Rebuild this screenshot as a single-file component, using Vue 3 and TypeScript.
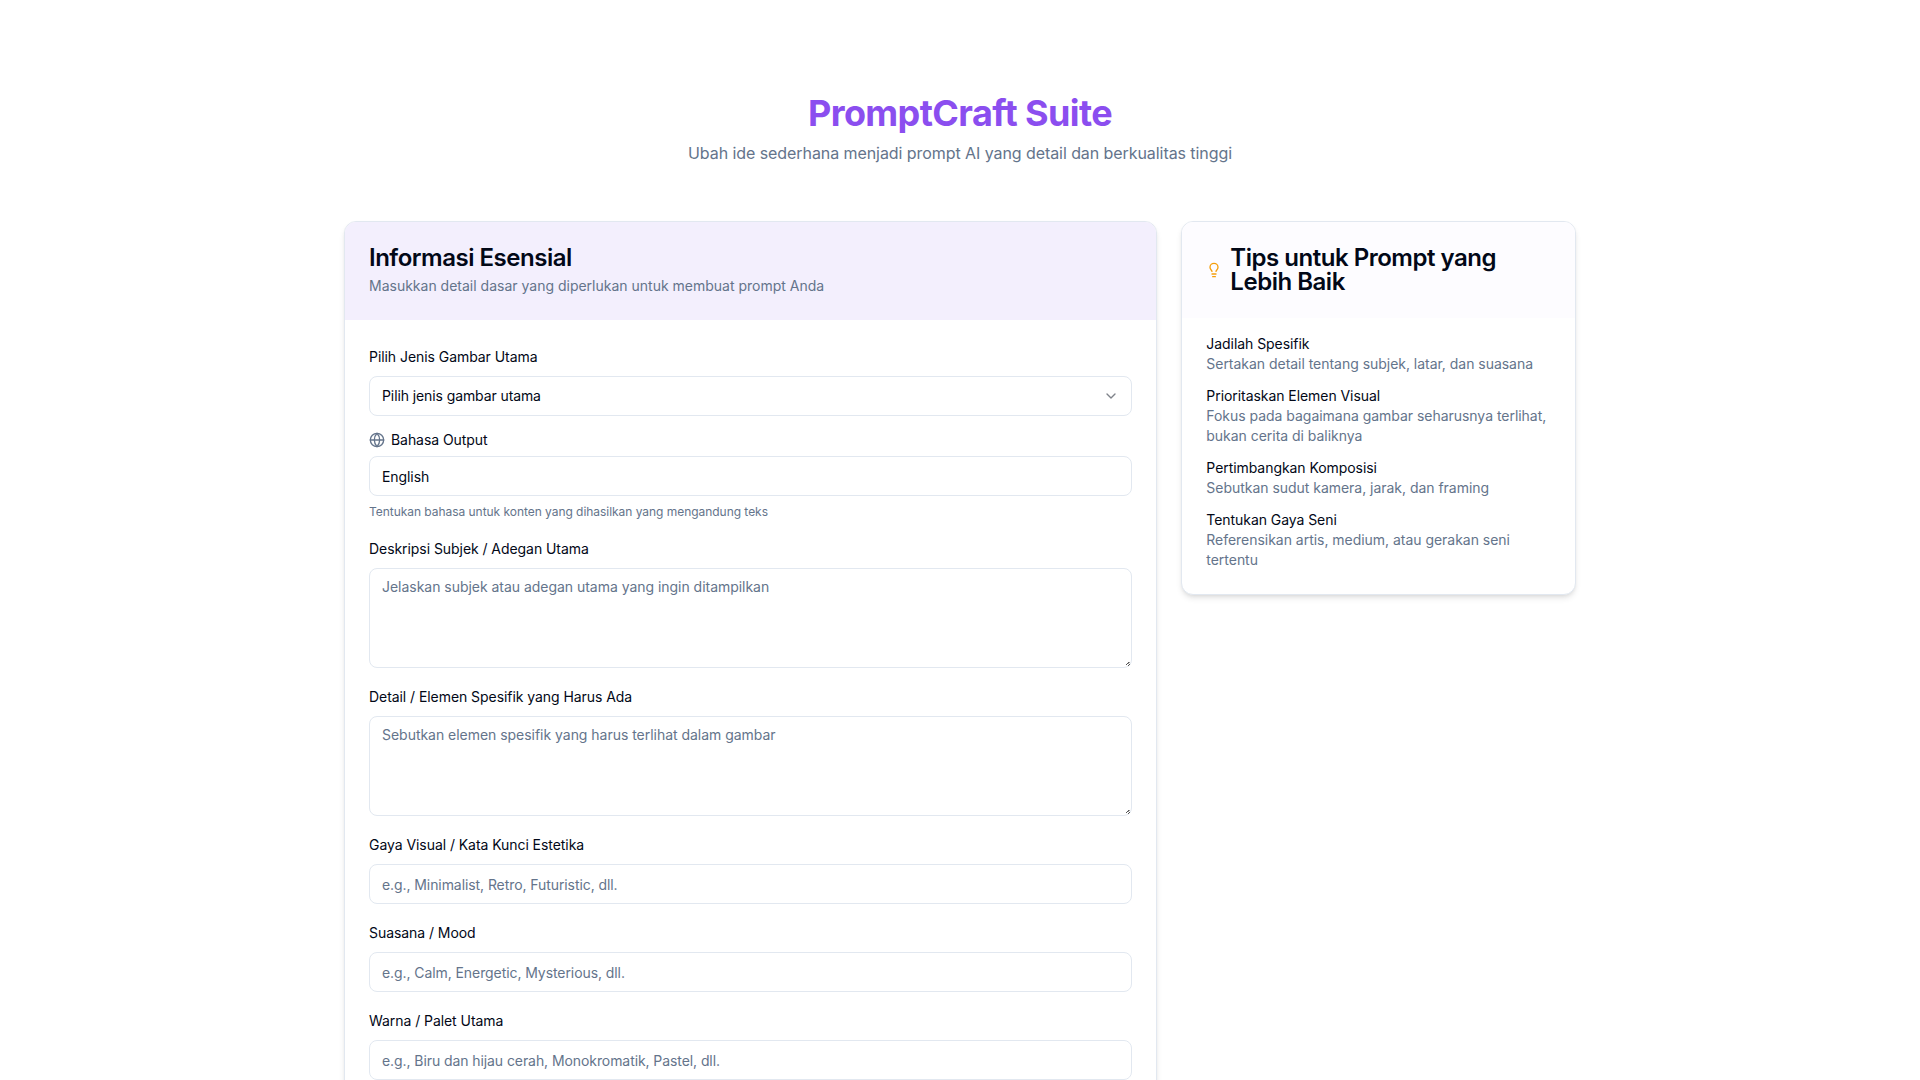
<script setup lang="ts">
interface Tip { title: string; text: string }
const tips: Tip[] = [
  { title: 'Jadilah Spesifik', text: 'Sertakan detail tentang subjek, latar, dan suasana' },
  { title: 'Prioritaskan Elemen Visual', text: 'Fokus pada bagaimana gambar seharusnya terlihat, bukan cerita di baliknya' },
  { title: 'Pertimbangkan Komposisi', text: 'Sebutkan sudut kamera, jarak, dan framing' },
  { title: 'Tentukan Gaya Seni', text: 'Referensikan artis, medium, atau gerakan seni tertentu' },
]
const inputs = [
  { label: 'Gaya Visual / Kata Kunci Estetika', placeholder: 'e.g., Minimalist, Retro, Futuristic, dll.' },
  { label: 'Suasana / Mood', placeholder: 'e.g., Calm, Energetic, Mysterious, dll.' },
  { label: 'Warna / Palet Utama', placeholder: 'e.g., Biru dan hijau cerah, Monokromatik, Pastel, dll.' },
]
const areas = [
  { label: 'Deskripsi Subjek / Adegan Utama', placeholder: 'Jelaskan subjek atau adegan utama yang ingin ditampilkan' },
  { label: 'Detail / Elemen Spesifik yang Harus Ada', placeholder: 'Sebutkan elemen spesifik yang harus terlihat dalam gambar' },
]
</script>

<template>
  <div class="page">
    <header class="hero">
      <h1>PromptCraft Suite</h1>
      <p>Ubah ide sederhana menjadi prompt AI yang detail dan berkualitas tinggi</p>
    </header>

    <main class="grid">
      <section class="card form-card">
        <div class="card-head form-head">
          <h2>Informasi Esensial</h2>
          <p>Masukkan detail dasar yang diperlukan untuk membuat prompt Anda</p>
        </div>
        <div class="form-body">
          <div class="field">
            <label>Pilih Jenis Gambar Utama</label>
            <button type="button" class="control select">
              <span>Pilih jenis gambar utama</span>
              <svg class="chev" viewBox="0 0 24 24" fill="none" stroke="currentColor" stroke-width="2" stroke-linecap="round" stroke-linejoin="round"><path d="m6 9 6 6 6-6" /></svg>
            </button>
          </div>

          <div class="field">
            <div class="icon-label">
              <svg viewBox="0 0 24 24" fill="none" stroke="currentColor" stroke-width="2" stroke-linecap="round" stroke-linejoin="round"><circle cx="12" cy="12" r="10" /><path d="M12 2a14.5 14.5 0 0 0 0 20 14.5 14.5 0 0 0 0-20" /><path d="M2 12h20" /></svg>
              <label>Bahasa Output</label>
            </div>
            <input class="control" value="English" />
            <p class="hint">Tentukan bahasa untuk konten yang dihasilkan yang mengandung teks</p>
          </div>

          <div v-for="a in areas" :key="a.label" class="field">
            <label>{{ a.label }}</label>
            <textarea class="control area" :placeholder="a.placeholder"></textarea>
          </div>

          <div v-for="i in inputs" :key="i.label" class="field">
            <label>{{ i.label }}</label>
            <input class="control" :placeholder="i.placeholder" />
          </div>
        </div>
      </section>

      <aside class="card tips-card">
        <div class="card-head tips-head">
          <svg class="bulb" viewBox="0 0 24 24" fill="none" stroke="currentColor" stroke-width="2" stroke-linecap="round" stroke-linejoin="round"><path d="M15 14c.2-1 .7-1.7 1.5-2.5 1-.9 1.5-2.2 1.5-3.5A6 6 0 0 0 6 8c0 1 .2 2.2 1.5 3.5.7.7 1.3 1.5 1.5 2.5" /><path d="M9 18h6" /><path d="M10 22h4" /></svg>
          <h2>Tips untuk Prompt yang Lebih Baik</h2>
        </div>
        <ul class="tips">
          <li v-for="t in tips" :key="t.title">
            <strong>{{ t.title }}</strong>
            <span>{{ t.text }}</span>
          </li>
        </ul>
      </aside>
    </main>
  </div>
</template>

<style>
html, body { margin: 0; background: #fff; }
</style>

<style scoped>
.page {
  box-sizing: border-box;
  max-width: 1280px;
  margin: 0 auto;
  padding: 93px 24px 48px;
  font-family: Inter, "Liberation Sans", sans-serif;
  color: #020817;
}
.hero { text-align: center; margin-bottom: 54px; }
.hero h1 {
  margin: 0 0 6px;
  font-size: 36px;
  line-height: 40px;
  font-weight: 700;
  letter-spacing: -0.6px;
  color: #8b4eef;
}
.hero p { margin: 0; font-size: 16px; line-height: 28px; letter-spacing: -0.07px; color: #64748b; }
.grid { display: grid; grid-template-columns: repeat(3, minmax(0, 1fr)); gap: 24px; align-items: start; }
.card {
  border: 1px solid #e2e8f0;
  border-radius: 12px;
  background: #fff;
  overflow: hidden;
  box-shadow: 0 4px 6px -1px rgba(0, 0, 0, .1), 0 2px 4px -2px rgba(0, 0, 0, .1);
}
.form-card { grid-column: span 2; }
.card-head { padding: 24px; }
.card-head h2 { margin: 0; font-size: 24px; line-height: 24px; font-weight: 600; letter-spacing: -0.48px; }
.form-head { background: #f3effd; }
.form-head p { margin: 6px 0 0; font-size: 14px; line-height: 20px; color: #64748b; }
.form-body { padding: 24px; display: flex; flex-direction: column; gap: 16px; }
.field { display: flex; flex-direction: column; }
label { display: block; font-size: 14px; line-height: 26px; font-weight: 400; letter-spacing: -0.06px; margin-bottom: 6px; }
.icon-label { display: flex; align-items: center; gap: 6px; height: 16px; margin-bottom: 8px; color: #64748b; }
.icon-label svg { width: 16px; height: 16px; flex: none; }
.icon-label label { margin: 0; line-height: 16px; color: #020817; }
.control {
  box-sizing: border-box;
  width: 100%;
  height: 40px;
  padding: 8px 12px;
  border: 1px solid #e2e8f0;
  border-radius: 8px;
  background: #fff;
  font: inherit;
  font-size: 14px;
  line-height: 20px;
  letter-spacing: -0.08px;
  color: #020817;
  outline: none;
}
.control::placeholder { color: #64748b; opacity: 1; }
.area { display: block; height: 100px; resize: vertical; letter-spacing: -0.03px; }
.area::-webkit-resizer {
  background:
    linear-gradient(#555, #555) 12px 10px / 1px 1px no-repeat,
    linear-gradient(#999, #999) 13px 10px / 1px 1px no-repeat,
    linear-gradient(#555, #555) 11px 11px / 1px 1px no-repeat,
    linear-gradient(#999, #999) 12px 11px / 1px 1px no-repeat,
    linear-gradient(#555, #555) 10px 12px / 1px 1px no-repeat,
    linear-gradient(#555, #555) 13px 12px / 1px 1px no-repeat,
    linear-gradient(#555, #555) 12px 13px / 1px 1px no-repeat;
}
.select { display: flex; align-items: center; justify-content: space-between; text-align: left; letter-spacing: -0.1px; }
.chev { width: 16px; height: 16px; opacity: .5; }
.hint { margin: 8px 0 0; font-size: 12px; line-height: 16px; letter-spacing: -0.04px; color: #64748b; }
.tips-head { display: flex; align-items: center; gap: 8px; background: #fdfcff; }
.bulb { width: 16px; height: 16px; flex: none; color: #f59e0b; }
.tips { list-style: none; margin: 0; padding: 16px 24px 24px; display: flex; flex-direction: column; gap: 12px; }
.tips li { font-size: 14px; line-height: 20px; }
.tips strong { display: block; font-weight: 400; letter-spacing: -0.06px; }
.tips span { display: block; letter-spacing: -0.03px; color: #64748b; }
</style>
